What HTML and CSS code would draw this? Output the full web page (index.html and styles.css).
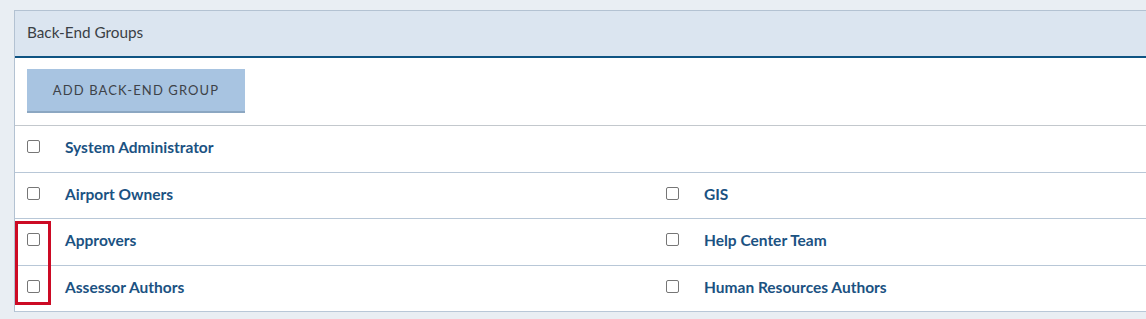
FILE: index.html
```html
<!DOCTYPE html>
<html lang="en">
<head>
<meta charset="utf-8">
<title>Back-End Groups</title>
<link rel="stylesheet" href="styles.css">
</head>
<body>
<div class="panel">
  <div class="panel-header">Back-End Groups</div>
  <div class="toolbar">
    <button class="btn-add" type="button">ADD BACK-END GROUP</button>
  </div>
  <div class="row">
    <label class="cell"><span class="box"></span><span class="name">System Administrator</span></label>
  </div>
  <div class="row">
    <label class="cell"><span class="box"></span><span class="name">Airport Owners</span></label>
    <label class="cell"><span class="box"></span><span class="name">GIS</span></label>
  </div>
  <div class="row">
    <label class="cell"><span class="box"></span><span class="name">Approvers</span></label>
    <label class="cell"><span class="box"></span><span class="name">Help Center Team</span></label>
  </div>
  <div class="row">
    <label class="cell"><span class="box"></span><span class="name">Assessor Authors</span></label>
    <label class="cell"><span class="box"></span><span class="name">Human Resources Authors</span></label>
  </div>
  <div class="highlight"></div>
</div>
</body>
</html>
```
FILE: styles.css
```css
html, body {
  margin: 0;
  padding: 0;
}
body {
  background: #e9eef3;
  font-family: Lato, "Liberation Sans", sans-serif;
  overflow: hidden;
  width: 1146px;
  height: 319px;
  padding: 10px 0 0 14px;
  box-sizing: border-box;
}
.panel {
  position: relative;
  width: 1290px;
  background: #ffffff;
  border-left: 1px solid #b3c2d2;
  border-top: 1px solid #b3c2d2;
}
.panel-header {
  background: #dbe5f0;
  height: 42px;
  padding-bottom: 3px;
  border-bottom: 2px solid #0f5483;
  box-sizing: content-box;
  display: flex;
  align-items: center;
  padding-left: 12px;
  font-size: 15.3px;
  color: #3a3f45;
}
.toolbar {
  padding: 11px 12px 12px;
  border-bottom: 1px solid #c3c8cd;
}
.btn-add {
  width: 218px;
  height: 44px;
  background: #a8c4e1;
  border: none;
  border-bottom: 2px solid #8ca7c2;
  color: #3d4248;
  font-family: Lato, "Liberation Sans", sans-serif;
  font-size: 13px;
  letter-spacing: 1.1px;
  padding: 0;
  cursor: pointer;
}
.row {
  display: grid;
  grid-template-columns: 639px 639px;
  height: 45.5px;
  border-bottom: 1px solid #b8c7d7;
}
.row:last-of-type {
  border-bottom-color: #c3c8cd;
}
.cell {
  display: flex;
  align-items: center;
  padding-left: 12px;
}
.box {
  width: 13px;
  height: 13px;
  box-sizing: border-box;
  border: 1px solid #767676;
  border-radius: 2px;
  background: #fff;
  margin-right: 25px;
  flex: none;
  margin-top: -4px;
}
.name {
  font-size: 15.5px;
  font-weight: 700;
  color: #1b5282;
  margin-top: -3px;
}
.highlight {
  position: absolute;
  left: 0;
  top: 210px;
  width: 36px;
  height: 84px;
  box-sizing: border-box;
  border: 3px solid #cc0a24;
}
```
